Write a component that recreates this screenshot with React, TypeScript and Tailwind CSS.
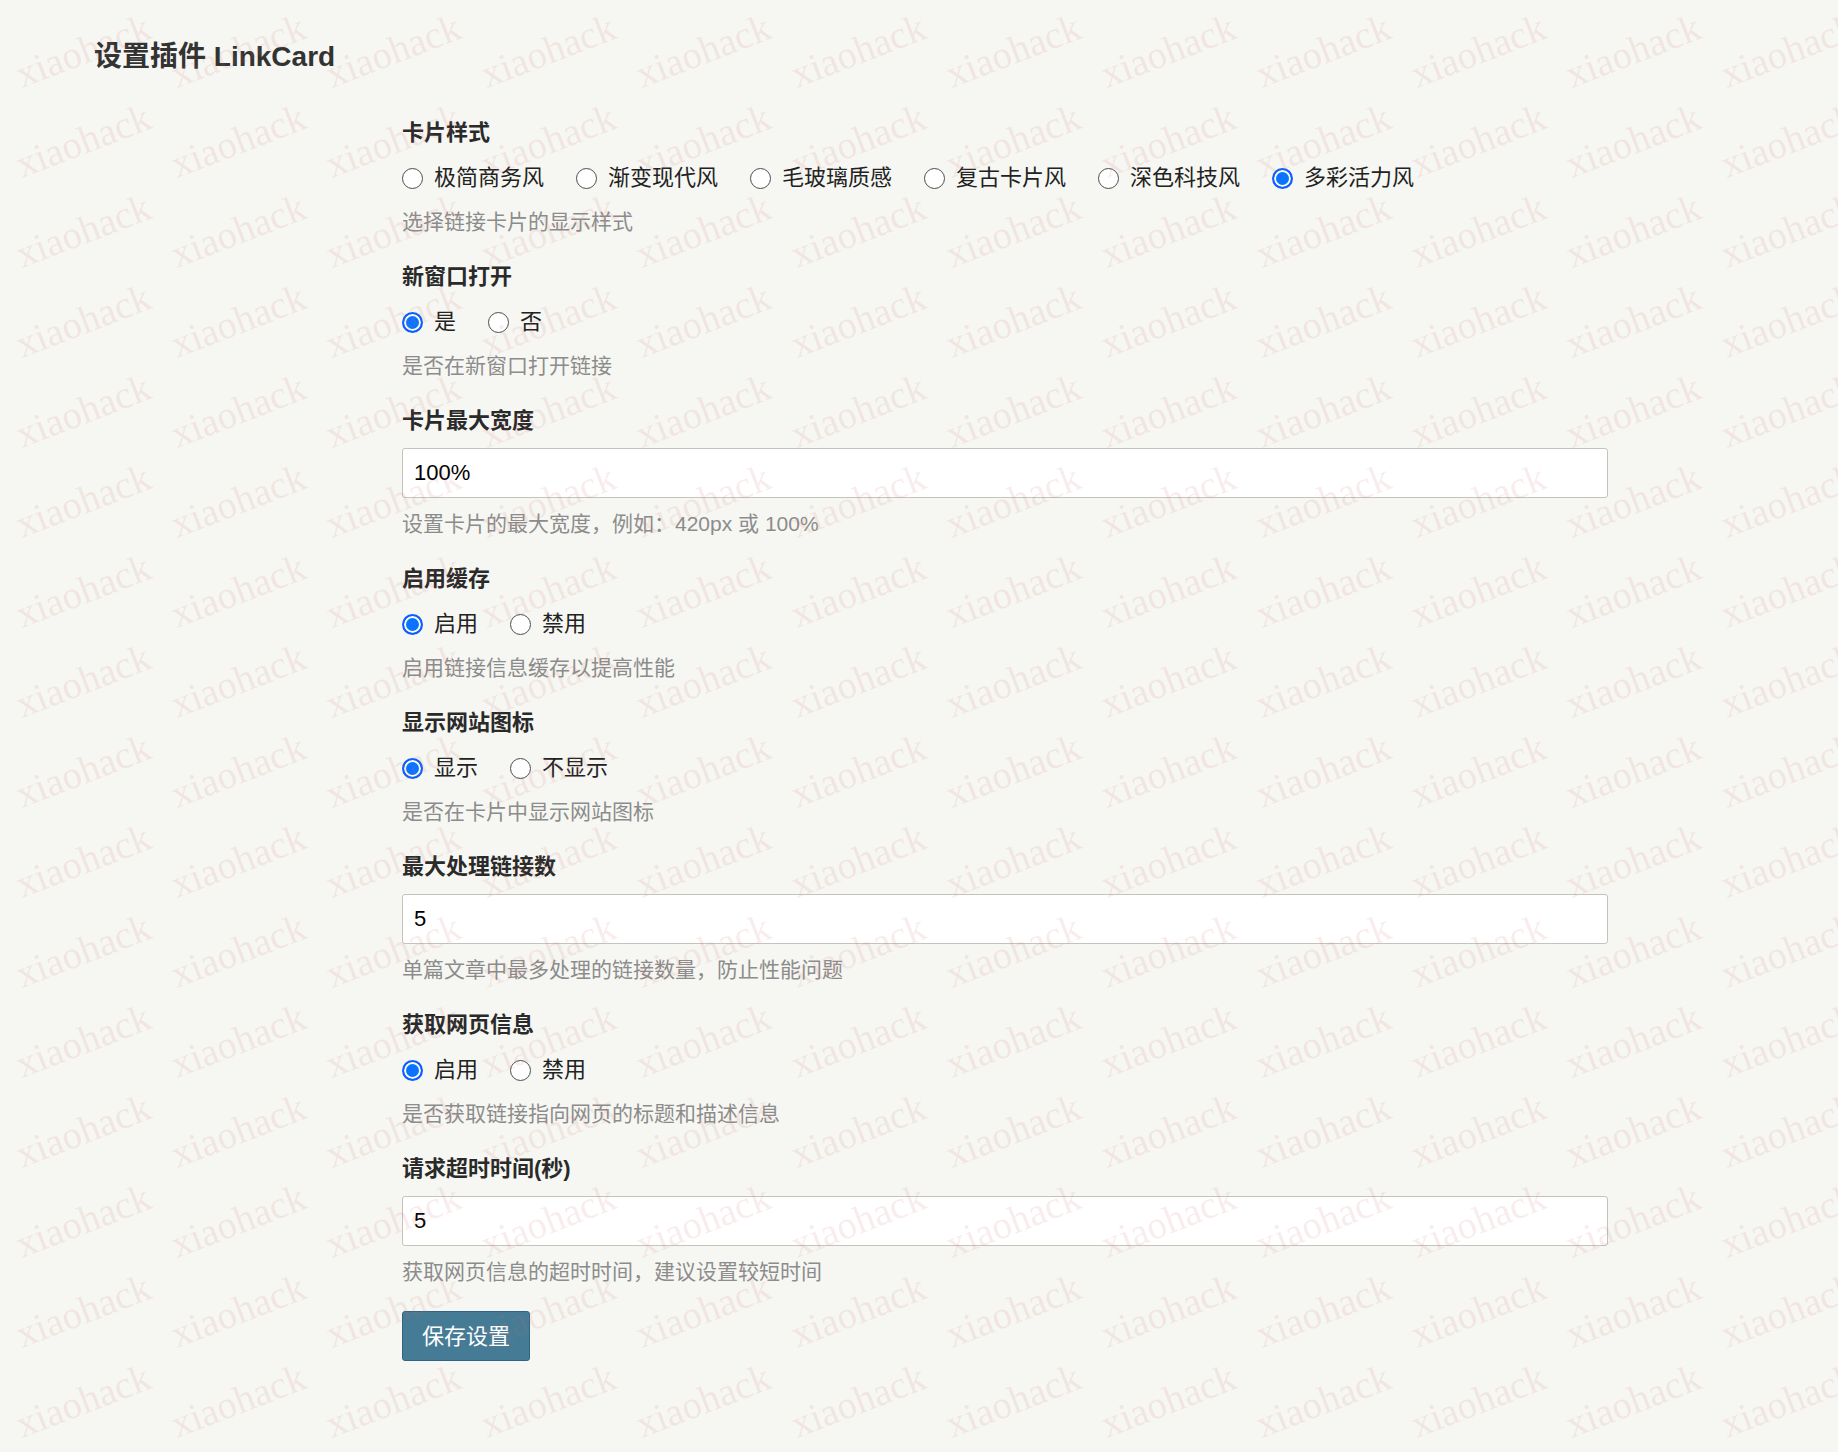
import { useState } from 'react'

type RadioField = {
  kind: 'radio'
  name: string
  label: string
  options: string[]
  value: string
  description: string
}
type TextField = {
  kind: 'text'
  name: string
  label: string
  value: string
  description: string
}
type Field = RadioField | TextField

const FIELDS: Field[] = [
  {
    kind: 'radio',
    name: 'cardStyle',
    label: '卡片样式',
    options: ['极简商务风', '渐变现代风', '毛玻璃质感', '复古卡片风', '深色科技风', '多彩活力风'],
    value: '多彩活力风',
    description: '选择链接卡片的显示样式',
  },
  {
    kind: 'radio',
    name: 'openInNewTab',
    label: '新窗口打开',
    options: ['是', '否'],
    value: '是',
    description: '是否在新窗口打开链接',
  },
  {
    kind: 'text',
    name: 'maxWidth',
    label: '卡片最大宽度',
    value: '100%',
    description: '设置卡片的最大宽度，例如：420px 或 100%',
  },
  {
    kind: 'radio',
    name: 'enableCache',
    label: '启用缓存',
    options: ['启用', '禁用'],
    value: '启用',
    description: '启用链接信息缓存以提高性能',
  },
  {
    kind: 'radio',
    name: 'showFavicon',
    label: '显示网站图标',
    options: ['显示', '不显示'],
    value: '显示',
    description: '是否在卡片中显示网站图标',
  },
  {
    kind: 'text',
    name: 'maxLinks',
    label: '最大处理链接数',
    value: '5',
    description: '单篇文章中最多处理的链接数量，防止性能问题',
  },
  {
    kind: 'radio',
    name: 'fetchInfo',
    label: '获取网页信息',
    options: ['启用', '禁用'],
    value: '启用',
    description: '是否获取链接指向网页的标题和描述信息',
  },
  {
    kind: 'text',
    name: 'timeout',
    label: '请求超时时间(秒)',
    value: '5',
    description: '获取网页信息的超时时间，建议设置较短时间',
  },
]

const LABEL_CLASS = 'block text-[22px] leading-8 font-bold text-[#2a2a2a]'
const DESCRIPTION_CLASS = 'mt-[10px] text-[21px] leading-8 text-[#8c8c8c]'

function RadioGroup({ field }: { field: RadioField }) {
  const [selected, setSelected] = useState(field.value)

  return (
    <fieldset>
      <legend className={LABEL_CLASS}>{field.label}</legend>
      <div className="mt-[11px] flex min-h-9 flex-wrap items-center gap-x-8">
        {field.options.map((option) => (
          <label key={option} className="flex items-center gap-[11px] text-[22px] leading-9 text-[#222]">
            <input
              type="radio"
              name={field.name}
              value={option}
              checked={selected === option}
              onChange={() => setSelected(option)}
              className="size-[21px] shrink-0 appearance-none rounded-full border border-[#4c4c4e] bg-white checked:border-2 checked:border-[#0a5fff] checked:bg-[#0a74ff] checked:shadow-[inset_0_0_0_2px_#fff]"
            />
            {option}
          </label>
        ))}
      </div>
      <p className={DESCRIPTION_CLASS}>{field.description}</p>
    </fieldset>
  )
}

function TextInput({ field }: { field: TextField }) {
  const [value, setValue] = useState(field.value)

  return (
    <div>
      <label htmlFor={field.name} className={LABEL_CLASS}>
        {field.label}
      </label>
      <input
        id={field.name}
        name={field.name}
        type="text"
        value={value}
        onChange={(e) => setValue(e.target.value)}
        className="mt-[11px] block h-[50px] w-full rounded-[3px] border border-[#c4c4bd] bg-white px-[11px] text-[22px] text-black"
      />
      <p className={DESCRIPTION_CLASS}>{field.description}</p>
    </div>
  )
}

/**
 * 铺满页面的斜向水印，不响应鼠标事件。
 */
function Watermark() {
  return (
    <svg className="pointer-events-none absolute inset-0 h-full w-full" aria-hidden="true">
      <defs>
        <pattern id="watermark" x="7" y="6" width="155" height="90" patternUnits="userSpaceOnUse">
          <text
            x="15"
            y="82"
            transform="rotate(-21 15 82)"
            fontSize="39"
            fill="#d2646e"
            fillOpacity="0.12"
            className="font-['Liberation_Serif',serif]"
          >
            xiaohack
          </text>
        </pattern>
      </defs>
      <rect width="100%" height="100%" fill="url(#watermark)" />
    </svg>
  )
}

export default function App() {
  return (
    <div className="relative min-h-screen bg-[#f6f7f2] px-[94px] pt-[37px] pb-20 font-['Liberation_Sans','Noto_Sans_CJK_SC',sans-serif]">
      <h2 className="text-[28px] leading-10 font-bold text-[#333]">设置插件 LinkCard</h2>
      <form className="mt-10 mr-[136px] ml-[308px]" onSubmit={(e) => e.preventDefault()}>
        <div className="flex flex-col gap-[23px]">
          {FIELDS.map((field) =>
            field.kind === 'radio' ? (
              <RadioGroup key={field.name} field={field} />
            ) : (
              <TextInput key={field.name} field={field} />
            ),
          )}
        </div>
        <button
          type="submit"
          className="mt-[23px] h-[50px] w-32 rounded-[3px] border border-[#2f6583] bg-[#467b96] text-[22px] text-white"
        >
          保存设置
        </button>
      </form>
      <Watermark />
    </div>
  )
}
